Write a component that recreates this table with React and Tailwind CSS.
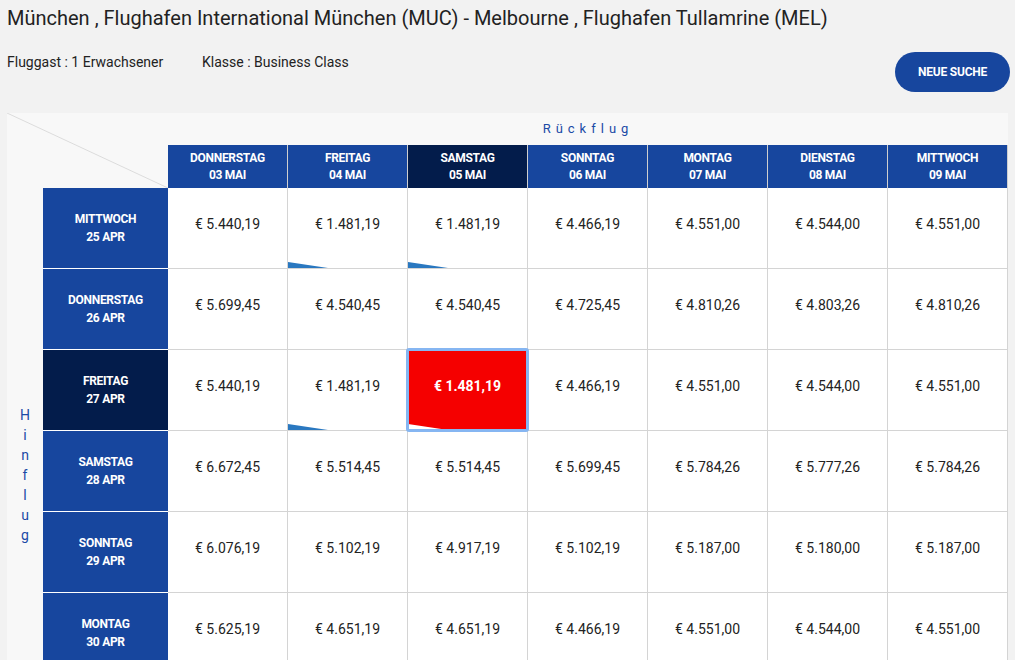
import clsx from 'clsx';

const returnDays = [
  ['DONNERSTAG', '03 MAI'],
  ['FREITAG', '04 MAI'],
  ['SAMSTAG', '05 MAI'],
  ['SONNTAG', '06 MAI'],
  ['MONTAG', '07 MAI'],
  ['DIENSTAG', '08 MAI'],
  ['MITTWOCH', '09 MAI'],
];

const outboundRows = [
  { day: 'MITTWOCH', date: '25 APR', prices: ['5.440,19', '1.481,19', '1.481,19', '4.466,19', '4.551,00', '4.544,00', '4.551,00'] },
  { day: 'DONNERSTAG', date: '26 APR', prices: ['5.699,45', '4.540,45', '4.540,45', '4.725,45', '4.810,26', '4.803,26', '4.810,26'] },
  { day: 'FREITAG', date: '27 APR', prices: ['5.440,19', '1.481,19', '1.481,19', '4.466,19', '4.551,00', '4.544,00', '4.551,00'] },
  { day: 'SAMSTAG', date: '28 APR', prices: ['6.672,45', '5.514,45', '5.514,45', '5.699,45', '5.784,26', '5.777,26', '5.784,26'] },
  { day: 'SONNTAG', date: '29 APR', prices: ['6.076,19', '5.102,19', '4.917,19', '5.102,19', '5.187,00', '5.180,00', '5.187,00'] },
  { day: 'MONTAG', date: '30 APR', prices: ['5.625,19', '4.651,19', '4.651,19', '4.466,19', '4.551,00', '4.544,00', '4.551,00'] },
  { day: 'DIENSTAG', date: '01 MAI', prices: ['5.440,19', '4.466,19', '4.466,19', '4.466,19', '4.551,00', '4.544,00', '4.551,00'] },
];

const SEL_ROW = 2;
const SEL_COL = 2;
const CHEAPEST = '1.481,19';

function Wedge({ white }) {
  return (
    <svg className="absolute left-0 bottom-0" width="40" height="6" viewBox="0 0 40 6">
      <polygon points="0,0 40,6 0,6" fill={white ? '#ffffff' : '#2a78c0'} />
    </svg>
  );
}

export default function App() {
  return (
    <div className="h-[660px] overflow-hidden bg-[#f2f2f2] text-[#222] font-['Roboto','Liberation_Sans',sans-serif]">
      {/* Title */}
      <h1 className="pt-1 px-[7px] text-[20px] leading-7 font-normal">
        München , Flughafen International München (MUC) - Melbourne , Flughafen Tullamrine (MEL)
      </h1>

      {/* Info + button */}
      <div className="flex items-start mt-5 pl-[7px] pr-[5px]">
        <span className="w-[195px] text-[14px] leading-5">Fluggast : 1 Erwachsener</span>
        <span className="text-[14px] leading-5">Klasse : Business Class</span>
        <button className="ml-auto w-[115px] h-10 rounded-full bg-[#17469e] text-white text-[12px] font-bold tracking-[-0.2px]">
          NEUE SUCHE
        </button>
      </div>

      {/* Matrix */}
      <div className="relative ml-[7px] mt-[21px] w-[1001px] bg-[#f8f8f8] grid grid-cols-[36px_125px_repeat(7,120px)] grid-rows-[32px_43px_repeat(7,81px)]">
        {/* corner diagonal */}
        <svg className="absolute left-0 top-0" width="161" height="75" viewBox="0 0 161 75">
          <line x1="0" y1="0" x2="161" y2="75" stroke="#dcdcdc" strokeWidth="1" />
        </svg>

        <div className="col-span-2" />
        <div className="col-span-7 flex items-center justify-center text-[13px] text-[#1a4aa6] tracking-[5px]">
          Rückflug
        </div>

        {/* column headers */}
        <div className="col-span-2" />
        {returnDays.map(([day, date], c) => (
          <div
            key={day}
            className={clsx(
              'flex flex-col items-center justify-center border-r border-[#cfcfcf] text-white text-[12px] font-bold leading-[17px] tracking-[-0.3px]',
              c === SEL_COL ? 'bg-[#031c4b]' : 'bg-[#17469e]'
            )}
          >
            <span>{day}</span>
            <span>{date}</span>
          </div>
        ))}

        {/* Hinflug label */}
        <div className="row-span-7 flex flex-col items-center pt-[217px] text-[14px] leading-5 text-[#1a4aa6]">
          {'Hinflug'.split('').map((ch, i) => (
            <span key={i}>{ch}</span>
          ))}
        </div>

        {outboundRows.map((row, r) => (
          <div key={row.day + row.date} className="contents">
            <div
              className={clsx(
                'flex flex-col items-center justify-center border-b border-white text-white text-[12px] font-bold leading-[18px] tracking-[-0.3px]',
                r === SEL_ROW ? 'bg-[#031c4b]' : 'bg-[#17469e]'
              )}
            >
              <span>{row.day}</span>
              <span>{row.date}</span>
            </div>
            {row.prices.map((p, c) => {
              const selected = r === SEL_ROW && c === SEL_COL;
              return (
                <div
                  key={c}
                  className={clsx(
                    'relative flex items-center justify-center pb-2 border-r border-b border-[#d4d4d4] text-[14px]',
                    selected ? 'bg-[#f50000] text-white font-bold z-10' : 'bg-white'
                  )}
                >
                  € {p}
                  {p === CHEAPEST && <Wedge white={selected} />}
                  {selected && (
                    <div className="absolute -inset-[2px] border-[3px] border-[#86b6f2] rounded-[3px]" />
                  )}
                </div>
              );
            })}
          </div>
        ))}
      </div>
    </div>
  );
}
